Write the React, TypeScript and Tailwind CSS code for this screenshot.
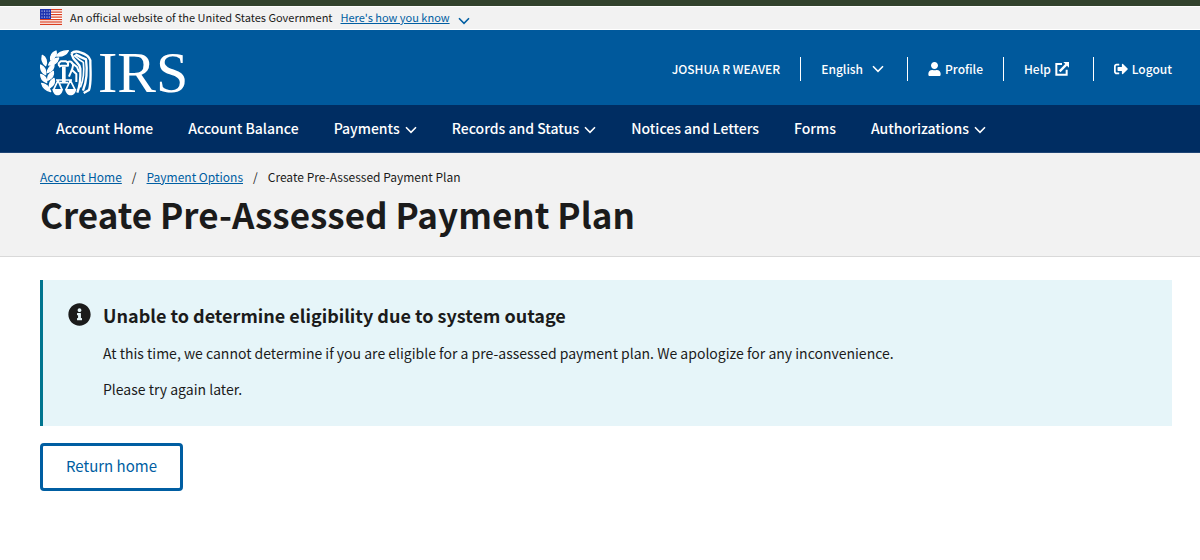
import type { ReactNode } from "react";
import { FaUser, FaSignOutAlt, FaInfoCircle } from "react-icons/fa";

function Chevron({ className = "" }: { className?: string }) {
  return (
    <svg viewBox="0 0 12 8" aria-hidden="true" className={`h-2 w-3 shrink-0 ${className}`} fill="none" stroke="currentColor" strokeWidth="1.6">
      <path d="M1 1.3 L6 6.3 L11 1.3" />
    </svg>
  );
}

function Flag() {
  return (
    <svg viewBox="0 0 22 16" className="h-4 w-[22px] shrink-0" role="img" aria-label="U.S. flag">
      <rect width="22" height="16" fill="#fff" />
      {[0, 2.5, 5, 7.5, 10, 12.4, 14.8].map((y) => (
        <rect key={y} y={y} width="22" height="1.2" fill="#db3e1f" />
      ))}
      <rect width="11" height="10" fill="#1e33b1" />
      {[2, 5, 8].map((y) =>
        [2, 4.5, 7, 9.3].map((x) => <circle key={`${x}-${y}`} cx={x} cy={y} r="0.6" fill="#fff" />),
      )}
    </svg>
  );
}

function Eagle() {
  return (
    <svg viewBox="0 0 156 138" className="h-[46px] w-[52px] shrink-0" aria-hidden="true">
      <g fill="#fff" stroke="#fff" strokeWidth="4" strokeLinejoin="round">
        <path d="M50 18 C54 8 66 3 85 2 C80 12 68 20 50 18Z" />
        <path d="M32 30 C30 16 38 7 48 3 C51 14 46 24 32 30Z" />
        <path d="M26 45 C31 32 42 25 56 24 C53 36 42 45 26 45Z" />
        <path d="M17 47 C7 39 4 29 7 16 C17 21 23 33 17 47Z" />
        <path d="M22 68 C23 56 30 47 42 42 C43 54 36 64 22 68Z" />
        <path d="M17 74 C6 69 1 58 2 45 C12 50 19 61 17 74Z" />
        <path d="M23 91 C22 79 29 69 40 64 C43 75 36 86 23 91Z" />
        <path d="M20 98 C8 94 2 84 2 73 C13 76 21 85 20 98Z" />
        <path d="M29 114 C26 101 32 91 42 85 C46 96 41 107 29 114Z" />
        <path d="M32 125 C17 121 8 112 5 100 C19 102 28 111 32 125Z" />
      </g>
      <g fill="#fff">
        <path d="M66 50 H77 V98 H66Z" />
        <path d="M37 117 H69 C67 130 60 136 53 136 C45 136 39 129 37 117Z" />
        <path d="M75 117 H109 C107 130 100 136 92 136 C84 136 77 129 75 117Z" />
      </g>
      <g fill="none" stroke="#fff" strokeLinejoin="round">
        <path strokeWidth="5" d="M41 119 L54 91 L66 119 M78 119 L91 91 L105 119 M48 90 H96 M60 98 H84" />
        <path strokeWidth="6" d="M57 48 L56 40 L62 34 H78 L84 39 V47 H64 L57 51" />
        <path strokeWidth="6" d="M82 37 C93 31 100 39 99 47 C98 60 91 68 87 80 M94 38 L111 51 L117 66 M97 61 L109 72 V96" />
        <path strokeWidth="7" d="M94 10 C102 3 111 3 121 7 C137 12 148 20 151 31 C151 67 155 95 147 120 L131 129" />
        <path strokeWidth="7" d="M94 10 L100 25 C107 36 119 40 121 56 C122 82 121 105 112 128" />
        <path strokeWidth="7" d="M106 13 L124 22 L138 28 C142 58 141 92 129 122" />
        <path strokeWidth="5" d="M102 16 L119 30 L130 37 C133 63 131 88 121 112" />
      </g>
    </svg>
  );
}

function ExternalIcon() {
  return (
    <svg viewBox="0 0 42 42" className="h-[14px] w-[14px]" aria-hidden="true">
      <path d="M21 6 H4 V38 H35 V23" fill="none" stroke="currentColor" strokeWidth="6" />
      <path d="M14 28 L34 8" stroke="currentColor" strokeWidth="7" />
      <path d="M25 0 H42 V17Z" fill="currentColor" />
    </svg>
  );
}

function UtilityItem({ children, className = "" }: { children: ReactNode; className?: string }) {
  return <li className={`flex h-6 items-center border-l border-white ${className}`}>{children}</li>;
}

const navItems = [
  { label: "Account Home" },
  { label: "Account Balance" },
  { label: "Payments", menu: true },
  { label: "Records and Status", menu: true },
  { label: "Notices and Letters" },
  { label: "Forms" },
  { label: "Authorizations", menu: true },
];

export default function App() {
  return (
    <div className="min-h-screen bg-white font-['Noto_Sans_CJK_SC',sans-serif] text-[#1b1b1b]">
      <div className="h-[6px] bg-[#33432d]" />
      <div className="flex h-6 items-center border-y border-white bg-[#f2f2f2] pb-[2px] pl-10 text-[11px] leading-4">
        <Flag />
        <p className="ml-2">An official website of the United States Government</p>
        <button type="button" className="ml-2 flex items-center text-[#005ea2]">
          <span className="underline">Here's how you know</span>
          <Chevron className="mt-2 ml-2" />
        </button>
      </div>

      <header className="text-white">
        <div className="flex h-[75px] items-center justify-between bg-[#00599c] pr-7 pl-10">
          <a href="#home" aria-label="IRS home" className="flex items-center gap-[6px] pt-[10px] font-['Liberation_Serif',serif] text-[58px] leading-[58px]">
            <Eagle />
            <span>IRS</span>
          </a>
          <ul className="flex items-center pt-[3px] text-[12px] leading-5 font-medium">
            <li className="pr-5">JOSHUA R WEAVER</li>
            <UtilityItem className="pr-[23px] pl-5">
              <button type="button" className="flex items-center gap-[9px]">
                English
                <Chevron />
              </button>
            </UtilityItem>
            <UtilityItem className="px-5">
              <a href="#profile" className="flex items-center gap-1">
                <FaUser className="h-[14px] w-[13px]" />
                Profile
              </a>
            </UtilityItem>
            <UtilityItem className="pr-6 pl-5">
              <a href="#help" className="flex items-center gap-1">
                Help
                <ExternalIcon />
              </a>
            </UtilityItem>
            <UtilityItem className="pl-5">
              <a href="#logout" className="flex items-center gap-1">
                <FaSignOutAlt className="h-[14px] w-[14px]" />
                Logout
              </a>
            </UtilityItem>
          </ul>
        </div>
        <nav aria-label="Primary" className="border-b border-[#1f4576] bg-[#002d62]">
          <ul className="flex h-[47px] items-center gap-[35px] pb-[2px] pl-14 text-[14px] leading-5 font-medium">
            {navItems.map((item) => (
              <li key={item.label}>
                {item.menu ? (
                  <button type="button" className="flex items-center gap-[5px]">
                    {item.label}
                    <Chevron className="mt-1" />
                  </button>
                ) : (
                  <a href="#page">{item.label}</a>
                )}
              </li>
            ))}
          </ul>
        </nav>
      </header>

      <main>
        <section className="border-b border-[#d9d9d9] bg-[#f2f2f2] px-10 pt-[14px] pb-5">
          <nav aria-label="Breadcrumb">
            <ol className="flex gap-[10px] text-[12px] leading-5">
              <li><a href="#account" className="text-[#005ea2] underline">Account Home</a></li>
              <li aria-hidden="true">/</li>
              <li><a href="#options" className="text-[#005ea2] underline">Payment Options</a></li>
              <li aria-hidden="true">/</li>
              <li>Create Pre-Assessed Payment Plan</li>
            </ol>
          </nav>
          <h1 className="mt-[5px] text-[35px] leading-[44px] font-bold">Create Pre-Assessed Payment Plan</h1>
        </section>

        <div className="pt-[23px] pr-7 pl-10">
          <section role="status" className="flex border-l-[3px] border-[#00758f] bg-[#e6f5f9] pt-[23px] pr-6 pb-[25px] pl-[25px]">
            <FaInfoCircle className="h-[23px] w-[23px] shrink-0" aria-hidden="true" />
            <div className="ml-3">
              <h2 className="text-[18px] leading-6 font-bold">Unable to determine eligibility due to system outage</h2>
              <p className="mt-[14px] text-[14px] leading-6">
                At this time, we cannot determine if you are eligible for a pre-assessed payment plan. We apologize for any inconvenience.
              </p>
              <p className="mt-3 text-[14px] leading-6">Please try again later.</p>
            </div>
          </section>
          <button type="button" className="mt-[17px] rounded border-[3px] border-[#005ea2] px-[23px] pt-2 pb-[10px] text-[15px] leading-6 text-[#005ea2]">
            Return home
          </button>
        </div>
      </main>
    </div>
  );
}
